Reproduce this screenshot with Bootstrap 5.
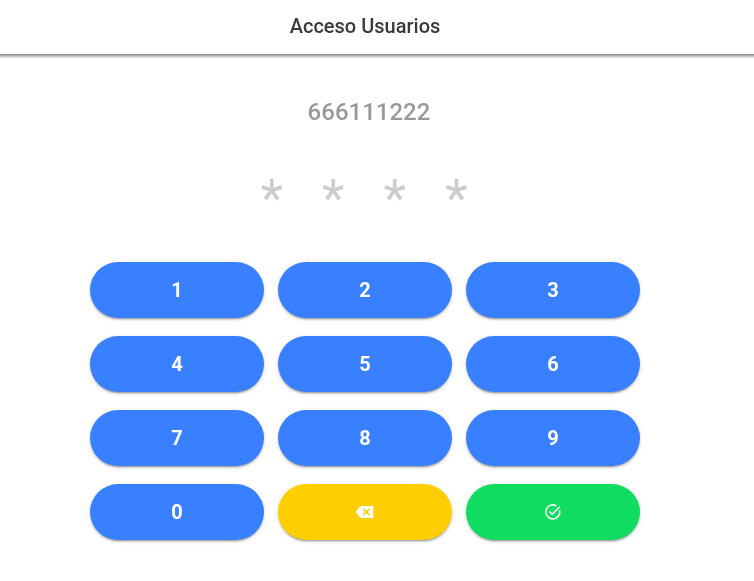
<!DOCTYPE html>
<html lang="es">
<head>
<meta charset="utf-8">
<title>Acceso Usuarios</title>
<link href="https://cdn.jsdelivr.net/npm/bootstrap@5.3.0/dist/css/bootstrap.min.css" rel="stylesheet">
<style>
html,body{height:100%;overflow:hidden}
body{font-family:Roboto,"Liberation Sans",sans-serif;background:#fff}
.app-bar{height:54px;width:754px;position:relative;will-change:transform}
.app-bar::after{content:"";position:absolute;left:0;right:0;top:54px;height:5px;background:linear-gradient(to bottom,rgba(0,0,0,.48),rgba(0,0,0,.3) 35%,rgba(0,0,0,.1) 70%,rgba(0,0,0,0))}
.app-title{width:730px;font-size:20px;font-weight:500;color:#3a3a3a;line-height:53px;margin:0}
.stage{width:730px;will-change:transform}
.phone{margin:44px 0 0 8px;font-size:24px;font-weight:500;line-height:28px;color:#999}
.pin{margin:44px 0 0 -2px;gap:39.2px;font-size:52px;line-height:58px;color:#ccc;height:58px}
.keys{margin:34px 0 0 90px;width:550px;display:grid;grid-template-columns:repeat(3,174px);column-gap:14px;row-gap:18px}
.key{height:56px;border:0;border-radius:28px;padding:0;color:#fff;font-size:20px;font-weight:700;display:flex;align-items:center;justify-content:center;box-shadow:0 3px 1px -2px rgba(0,0,0,.2),0 2px 2px 0 rgba(0,0,0,.14),0 1px 5px 0 rgba(0,0,0,.12)}
.key-blue{background:#3880ff}
.key-amber{background:#ffce00}
.key-green{background:#10dc60}
</style>
</head>
<body>
<header class="app-bar"><h1 class="app-title text-center">Acceso Usuarios</h1></header>
<main class="stage">
  <div class="phone text-center">666111222</div>
  <div class="pin d-flex justify-content-center"><span>*</span><span>*</span><span>*</span><span>*</span></div>
  <div class="keys">
    <button class="key key-blue">1</button>
    <button class="key key-blue">2</button>
    <button class="key key-blue">3</button>
    <button class="key key-blue">4</button>
    <button class="key key-blue">5</button>
    <button class="key key-blue">6</button>
    <button class="key key-blue">7</button>
    <button class="key key-blue">8</button>
    <button class="key key-blue">9</button>
    <button class="key key-blue">0</button>
    <button class="key key-amber" aria-label="Borrar">
      <svg width="18" height="12" viewBox="0 0 18 12"><path fill="#fff" fill-rule="evenodd" d="M4.6 0H17.3V12H4.6L.6 7.2C0 6.4 0 5.6.6 4.8ZM7.9 2.4 6.8 3.5 9.2 6 6.8 8.5 7.9 9.6 10.4 7.1 12.9 9.6 14 8.5 11.6 6 14 3.5 12.9 2.4 10.4 4.9Z"/></svg>
    </button>
    <button class="key key-green" aria-label="Confirmar">
      <svg width="18" height="18" viewBox="0 0 18 18" fill="none" stroke="#fff" stroke-width="1.5"><path d="M15.6 7.2A7 7 0 1 1 12.4 2.9"/><path d="M5.3 8.4 8.2 11.3 15.8 3.8"/></svg>
    </button>
  </div>
</main>
<script src="https://cdn.jsdelivr.net/npm/bootstrap@5.3.0/dist/js/bootstrap.bundle.min.js"></script>
</body>
</html>
